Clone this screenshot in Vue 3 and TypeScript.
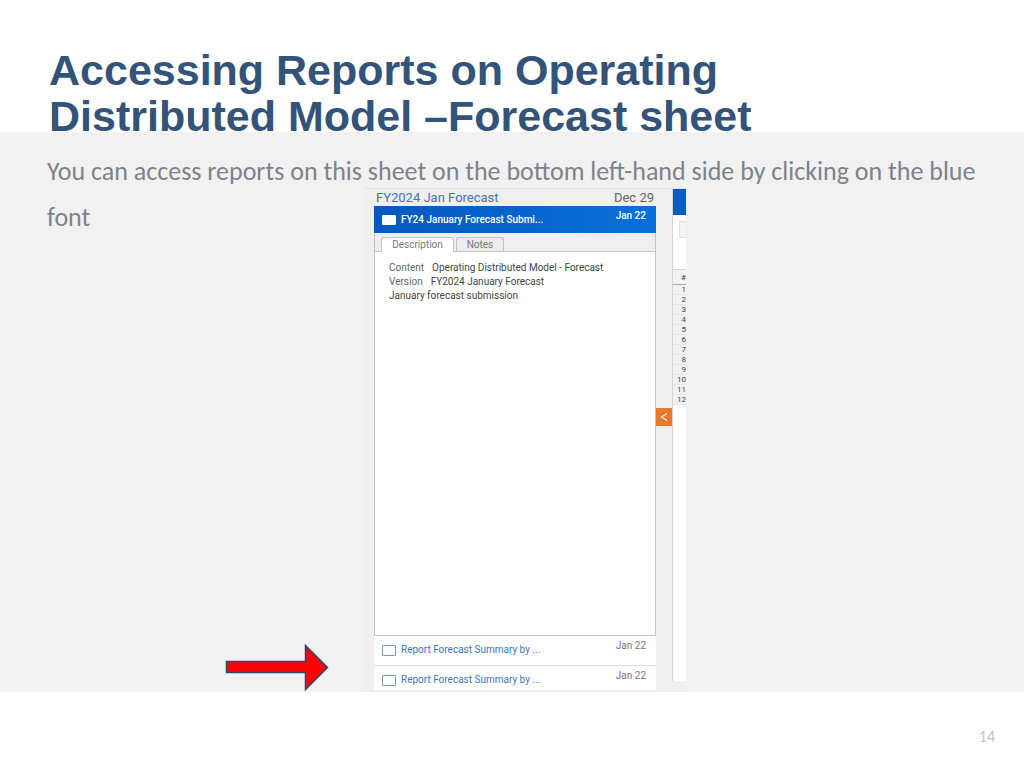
<script setup lang="ts">
import { ref } from 'vue'

interface Report {
  id: string
  label: string
  date: string
}

const reports: Report[] = [
  { id: 'report-one', label: 'Report Forecast Summary by ...', date: 'Jan 22' },
  { id: 'report-two', label: 'Report Forecast Summary by ...', date: 'Jan 22' },
]
const rowNumbers: string[] = ['1', '2', '3', '4', '5', '6', '7', '8', '9', '10', '11', '12']
const tabs: string[] = ['Description', 'Notes']
const activeTab = ref<string>('Description')
</script>

<template>
  <div class="slide">
    <header class="slide-header">
      <h1>Accessing Reports on Operating<br />Distributed Model –Forecast sheet</h1>
    </header>

    <main class="slide-body">
      <p class="lead">
        You can access reports on this sheet on the bottom left-hand side by clicking on the blue<br />font
      </p>

      <svg class="arrow" viewBox="0 0 104 47" aria-hidden="true">
        <path d="M1.5 17.5H80.5V1.5L102.500 23.5L80.500 45.500V28.500H1.500Z" fill="#fe0000" stroke="#2c4a6b" stroke-width="1.5" />
      </svg>

      <section class="app">
        <div class="tasks">
          <div class="task-group">
            <a href="#forecast">FY2024 Jan Forecast</a>
            <span>Dec 29</span>
          </div>
          <div class="task-selected">
            <input id="submission" type="checkbox" />
            <label for="submission">FY24 January Forecast Submi...</label>
            <span class="date">Jan 22</span>
          </div>
          <div class="details">
            <div class="tabs" role="tablist">
              <button
                v-for="tab in tabs"
                :key="tab"
                type="button"
                role="tab"
                class="tab"
                :class="{ active: tab === activeTab }"
                :aria-selected="tab === activeTab"
                @click="activeTab = tab"
              >{{ tab }}</button>
            </div>
            <div class="description">
              <div class="field"><span class="key">Content</span><span>Operating Distributed Model - Forecast</span></div>
              <div class="field"><span class="key">Version</span><span>FY2024 January Forecast</span></div>
              <div class="field">January forecast submission</div>
            </div>
          </div>
          <div class="reports">
            <div v-for="report in reports" :key="report.id" class="report">
              <input :id="report.id" type="checkbox" :aria-label="report.label" />
              <a :href="'#' + report.id">{{ report.label }}</a>
              <span class="date">{{ report.date }}</span>
            </div>
          </div>
        </div>

        <div class="divider">
          <button type="button" class="collapse" aria-label="Collapse">
            <svg viewBox="0 0 16 18" width="16" height="18"><path d="M11 5.500L5.500 9L11 12.500" fill="none" stroke="#fff" stroke-width="1.2" /></svg>
          </button>
        </div>

        <div class="sheet">
          <div class="sheet-bar"></div>
          <div class="sheet-tools"><div class="tool"></div></div>
          <table class="rows">
            <thead>
              <tr><th>#</th></tr>
            </thead>
            <tbody>
              <tr v-for="n in rowNumbers" :key="n"><td>{{ n }}</td></tr>
            </tbody>
          </table>
        </div>
      </section>
    </main>

    <footer class="slide-footer">14</footer>
  </div>
</template>

<style>
body {
  background: #fff;
}
</style>

<style scoped>
.slide,
.slide * {
  box-sizing: border-box;
}
.slide {
  display: flex;
  flex-direction: column;
  min-height: 100vh;
  overflow: hidden;
}
.slide-header {
  padding: 47px 49px 0;
}
h1 {
  margin: 0;
  height: 85px;
  color: #335378;
  font: bold 43px/46px "Liberation Sans", Arial, sans-serif;
}
.slide-body {
  flex: 1;
  display: grid;
  grid-template-columns: 365fr 321px 338fr;
  grid-template-rows: minmax(0, 1fr);
  background: #f1f1f1;
}
.lead {
  grid-area: 1 / 1 / 2 / 4;
  margin: 0;
  padding: 16px 0 0 47px;
  color: #7d828c;
  font: 26px/46px Carlito, Lato, sans-serif;
  white-space: nowrap;
}
.arrow {
  grid-area: 1 / 1;
  justify-self: end;
  align-self: end;
  width: 104px;
  height: 47px;
  margin: 0 36px 1px 0;
}
.app {
  grid-area: 1 / 2;
  display: grid;
  grid-template-columns: minmax(0, 1fr) 16px 14px;
  margin-top: 56px;
  padding-left: 9px;
  border-top: 1px solid #e2e2e2;
  background: #efefef;
  color: #444;
  font: 10px/14px Roboto, sans-serif;
}
.tasks {
  display: flex;
  flex-direction: column;
  padding-bottom: 2px;
}
.task-group {
  display: flex;
  justify-content: space-between;
  height: 17px;
  padding: 0 2px;
  color: #666;
  font-size: 13px;
  line-height: 17px;
}
a {
  color: #3d76bd;
  text-decoration: none;
}
.task-selected {
  display: flex;
  align-items: center;
  height: 27px;
  padding: 0 10px 0 8px;
  background: linear-gradient(90deg, #0359bd, #0870db);
  color: #fff;
  font-weight: 500;
}
input {
  appearance: none;
  flex: none;
  width: 14px;
  height: 10px;
  margin: 0 5px 0 0;
  border: 1px solid #6f9fa8;
  border-radius: 1px;
  background: #fff;
}
.task-selected input {
  border-color: #fff;
}
.date {
  align-self: flex-start;
  margin-left: auto;
  padding-top: 3px;
}
.details {
  flex: 1;
  display: flex;
  flex-direction: column;
  border: 1px solid #c4c4c4;
  border-top: 0;
  background: #fff;
}
.tabs {
  display: flex;
  align-items: flex-end;
  gap: 2px;
  height: 19px;
  padding-left: 6px;
  border-bottom: 1px solid #c8c8c8;
  background: #efefef;
}
.tab {
  width: 48px;
  height: 14px;
  padding: 0;
  border: 1px solid #c4c4c4;
  border-bottom: 0;
  border-radius: 3px 3px 0 0;
  background: #ececec;
  color: #777;
  font: 10px/12px Roboto, sans-serif;
}
.tab:first-child {
  width: 73px;
}
.tab.active {
  margin-bottom: -1px;
  height: 15px;
  background: #fff;
}
.description {
  padding: 9px 14px;
}
.field {
  display: flex;
  gap: 8px;
  line-height: 14px;
}
.key {
  color: #666;
}
.reports {
  background: #fff;
}
.report {
  display: flex;
  align-items: flex-start;
  height: 29px;
  padding: 7px 10px 0 8px;
}
.report + .report {
  height: 25px;
  border-top: 1px solid #e2e2e2;
}
.report input {
  height: 11px;
  margin-top: 2px;
}
.report .date {
  margin-top: -4px;
  padding-top: 0;
  color: #777;
}
.divider {
  display: flex;
  align-items: center;
}
.collapse {
  flex: none;
  width: 16px;
  height: 18px;
  margin-top: -48px;
  padding: 0;
  border: 0;
  background: #e8782c;
}
.collapse svg {
  display: block;
}
.sheet {
  margin-bottom: 11px;
  overflow: hidden;
  border-left: 1px solid #d4d4d4;
  background: #fff;
}
.sheet-bar {
  height: 26px;
  background: #075cbf;
}
.sheet-tools {
  height: 54px;
  padding: 6px 0 0 6px;
}
.tool {
  height: 17px;
  border: 1px solid #e2e2e2;
  border-right: 0;
  background: #f4f4f4;
}
.rows {
  width: 100%;
  table-layout: fixed;
  border-collapse: collapse;
  background: #f1f1f1;
  font-size: 8px;
}
th,
td {
  height: 10px;
  padding: 0;
  border-bottom: 1px solid #e6e6e6;
  font-weight: 400;
  line-height: 9px;
  text-align: right;
}
th {
  height: 15px;
  border-top: 1px solid #d4d4d4;
  border-bottom-color: #aaa;
}
.slide-footer {
  display: flex;
  justify-content: flex-end;
  height: 76px;
  padding: 36px 29px 0 0;
  color: #c4c4c4;
  font: 16px/18px Carlito, Lato, sans-serif;
}
</style>
